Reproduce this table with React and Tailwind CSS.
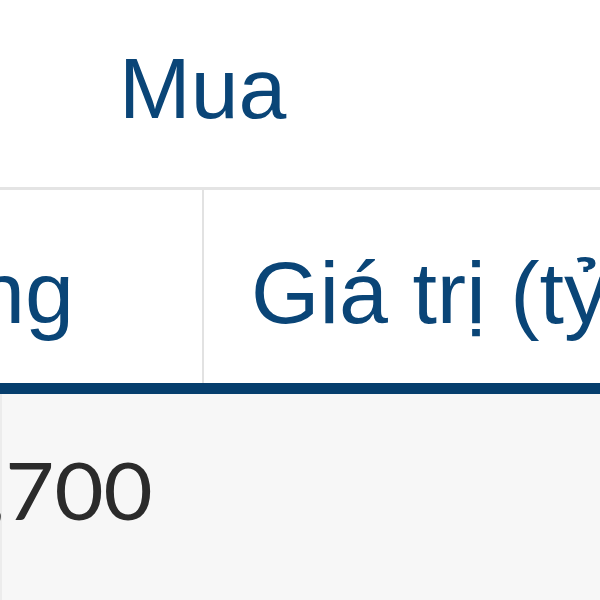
export default function App() {
  return (
    <div className="w-[600px] h-[600px] overflow-hidden bg-white flex flex-col">
      <div className="h-[187px] shrink-0 pl-[119px] pt-[45px] font-['Liberation_Sans',Arial,sans-serif] text-[86px] leading-none text-[#0a4577]">
        Mua
      </div>
      <div className="h-[3px] shrink-0 bg-[#e4e4e4]" />
      <div className="h-[193px] shrink-0 flex font-['Liberation_Sans',Arial,sans-serif] text-[88px] leading-none text-[#0a4577]">
        <div className="w-[202px] shrink-0 flex justify-end pr-[128px] pt-[59px] whitespace-nowrap">
          Khối lượng
        </div>
        <div className="w-[2px] shrink-0 bg-[#e2e2e2]" />
        <div className="flex-1 pl-[47px] pt-[59px] whitespace-nowrap overflow-hidden">
          Giá trị (tỷ đồng)
        </div>
      </div>
      <div className="h-[11px] shrink-0 bg-[#063e6d]" />
      <div className="flex-1 flex bg-[#f7f7f7] font-['Lato',sans-serif] text-[80px] leading-none text-[#2b2b2b]">
        <div className="w-[2px] shrink-0 bg-[#ececec]" />
        <div className="w-[200px] shrink-0 flex justify-end pr-[49px] pt-[55px] whitespace-nowrap">
          <span className="inline-block origin-right scale-x-[1.06]">1,700</span>
        </div>
        <div className="flex-1" />
      </div>
    </div>
  );
}
